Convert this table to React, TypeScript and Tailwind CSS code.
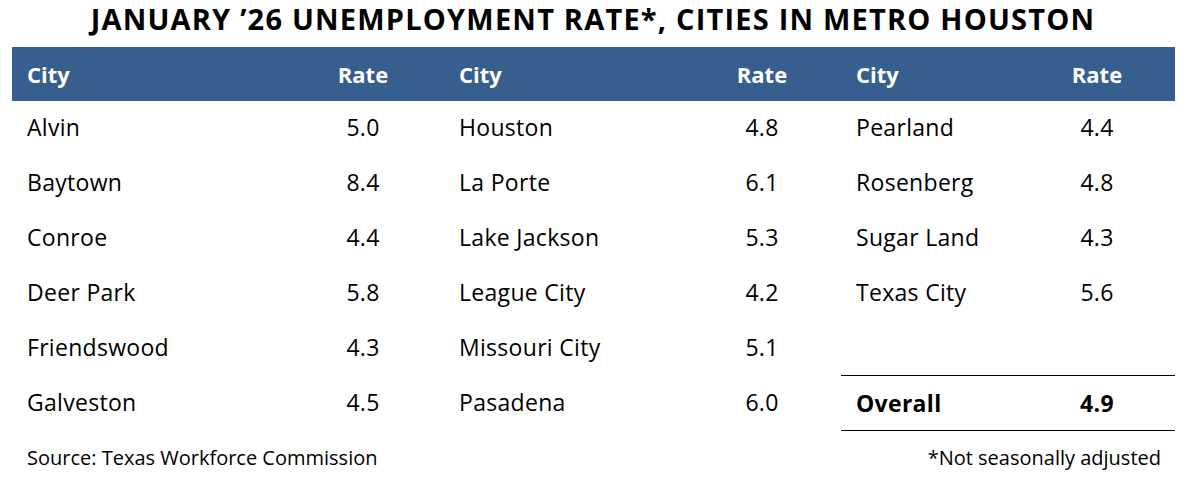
const COL1 = [
  ["Alvin", "5.0"],
  ["Baytown", "8.4"],
  ["Conroe", "4.4"],
  ["Deer Park", "5.8"],
  ["Friendswood", "4.3"],
  ["Galveston", "4.5"],
];

const COL2 = [
  ["Houston", "4.8"],
  ["La Porte", "6.1"],
  ["Lake Jackson", "5.3"],
  ["League City", "4.2"],
  ["Missouri City", "5.1"],
  ["Pasadena", "6.0"],
];

const COL3 = [
  ["Pearland", "4.4"],
  ["Rosenberg", "4.8"],
  ["Sugar Land", "4.3"],
  ["Texas City", "5.6"],
];

function Rows({ rows, cityW }: { rows: string[][]; cityW: string }) {
  return (
    <>
      {rows.map(([city, rate]) => (
        <div key={city} className="flex h-[55px] items-center pl-[15px]">
          <span className={cityW}>{city}</span>
          <span className="w-[80px] text-center">{rate}</span>
        </div>
      ))}
    </>
  );
}

export default function App() {
  return (
    <div className="w-[1186px] h-[481px] bg-white text-black font-['Open_Sans',sans-serif] overflow-hidden">
      {/* Title */}
      <h1 className="h-[47px] text-center text-[29px] font-bold leading-[38px] tracking-[1.2px] whitespace-nowrap">
        JANUARY ’26 UNEMPLOYMENT RATE*, CITIES IN METRO HOUSTON
      </h1>

      <div className="ml-[12px] w-[1163px]">
        {/* Header bar */}
        <div className="flex h-[54px] items-center bg-[#365e8f] text-[22px] font-bold text-white">
          <div className="flex w-[432px] pl-[15px]">
            <span className="w-[296px]">City</span>
            <span className="w-[80px] text-center">Rate</span>
          </div>
          <div className="flex w-[397px] pl-[15px]">
            <span className="w-[263px]">City</span>
            <span className="w-[80px] text-center">Rate</span>
          </div>
          <div className="flex w-[334px] pl-[15px]">
            <span className="w-[201px]">City</span>
            <span className="w-[80px] text-center">Rate</span>
          </div>
        </div>

        {/* Body */}
        <div className="-mt-[1px] flex text-[23px] tracking-[0.3px]">
          <div className="w-[432px]">
            <Rows rows={COL1} cityW="w-[296px]" />
          </div>
          <div className="w-[397px]">
            <Rows rows={COL2} cityW="w-[263px]" />
          </div>
          <div className="w-[334px]">
            <Rows rows={COL3} cityW="w-[201px]" />
            <div className="h-[55px]" />
            <div className="flex h-[56px] items-center border-y border-black pl-[15px] font-bold">
              <span className="w-[201px]">Overall</span>
              <span className="w-[80px] text-center">4.9</span>
            </div>
          </div>
        </div>

        {/* Footer */}
        <div className="flex h-[50px] items-center justify-between pt-[4px] pl-[15px] pr-[14px] text-[20px]">
          <span>Source: Texas Workforce Commission</span>
          <span>*Not seasonally adjusted</span>
        </div>
      </div>
    </div>
  );
}
